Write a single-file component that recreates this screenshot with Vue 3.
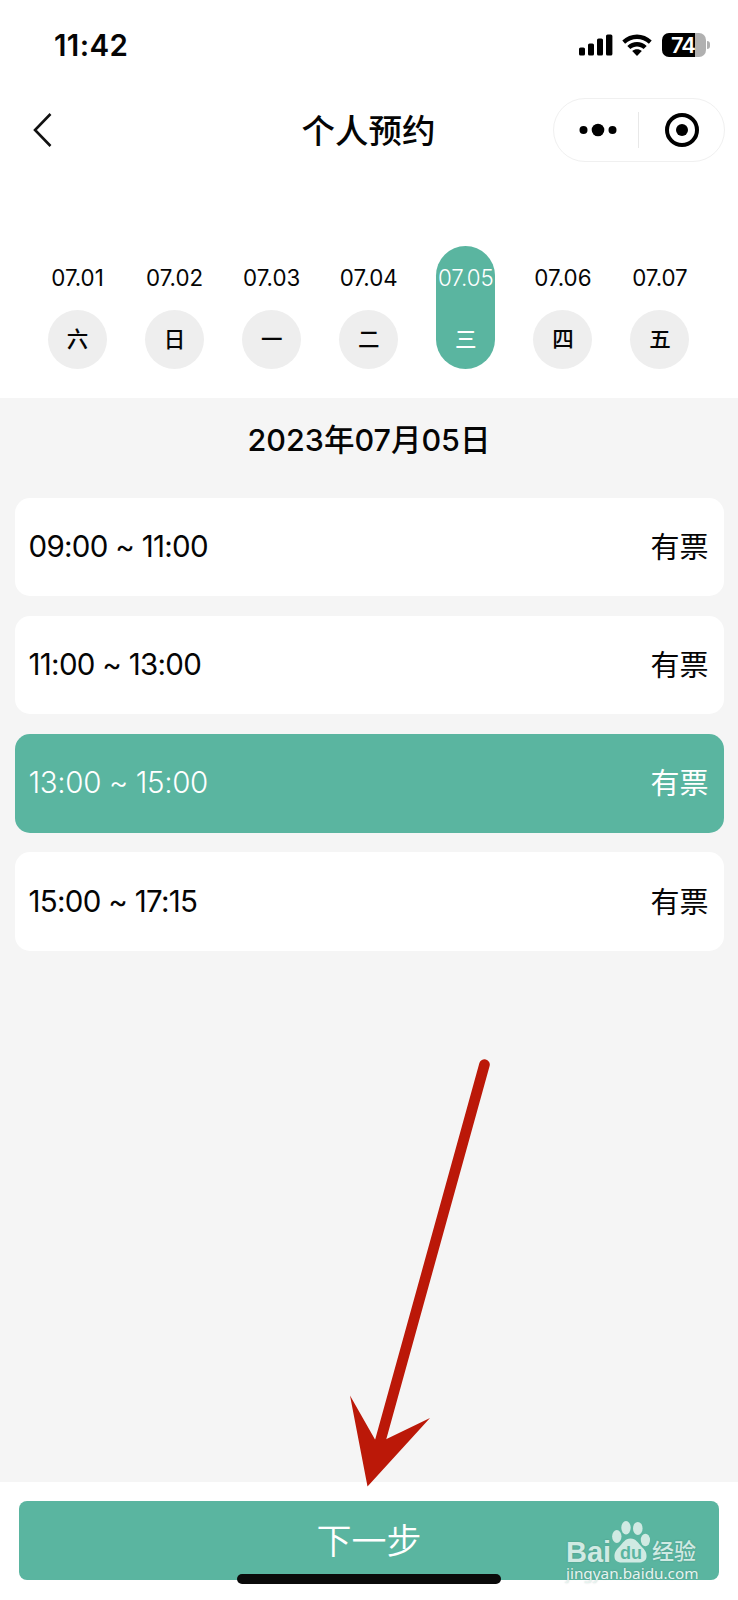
<template>
  <div class="page">
    <!-- 状态栏 -->
    <div class="status-bar">
      <div class="clock">11:42</div>
      <div class="status-icons">
        <svg class="signal" viewBox="0 0 34 22">
          <rect x="0" y="13.5" width="6" height="8" rx="1.6" />
          <rect x="9" y="9.5" width="6" height="12" rx="1.6" />
          <rect x="18" y="4.5" width="6" height="17" rx="1.6" />
          <rect x="27" y="0.5" width="6.4" height="21" rx="1.6" />
        </svg>
        <svg class="wifi" viewBox="0 0 30 22">
          <path d="M0.3 6.6C8.3 -1.6 21.7 -1.6 29.7 6.6L26.9 9.8C20.4 3.4 9.6 3.4 3.1 9.8Z" />
          <path d="M5.3 11.9C10.6 6.700 19.4 6.700 24.7 11.9L21.6 15.1C18.1 11.500 11.9 11.500 8.4 15.1Z" />
          <path d="M10.2 17C12.9 14.5 17.1 14.5 19.8 17L15 21.9Z" />
        </svg>
        <div class="battery">
          <div class="battery-body">74</div>
          <div class="battery-cap"></div>
        </div>
      </div>
    </div>

    <!-- 导航栏 -->
    <div class="nav-bar">
      <svg class="back" viewBox="0 0 20 36">
        <path d="M17.5 2L2 18L17.5 34" />
      </svg>
      <div class="title">个人预约</div>
      <div class="capsule">
        <svg class="more" viewBox="0 0 38 14">
          <circle cx="4.5" cy="7" r="4" />
          <circle cx="19" cy="7" r="6.3" />
          <circle cx="33.5" cy="7" r="4" />
        </svg>
        <div class="divider"></div>
        <svg class="close" viewBox="0 0 34 34">
          <circle class="ring" cx="17" cy="17" r="15" />
          <circle cx="17" cy="17" r="6" />
        </svg>
      </div>
    </div>

    <!-- 日期选择 -->
    <div class="days">
      <div
        v-for="day in days"
        :key="day.date"
        class="day"
        :class="{ active: day.date === activeDay }"
        @click="activeDay = day.date"
      >
        <div class="day-date">{{ day.date }}</div>
        <div class="day-week">{{ day.week }}</div>
      </div>
    </div>

    <!-- 时间段 -->
    <div class="content">
      <div class="full-date">{{ fullDate }}</div>
      <div class="slots">
        <div
          v-for="(slot, index) in slots"
          :key="slot.time"
          class="slot"
          :class="{ active: index === activeSlot }"
          @click="activeSlot = index"
        >
          <div class="slot-time">{{ slot.time }}</div>
          <div class="slot-state">{{ slot.state }}</div>
        </div>
      </div>
    </div>

    <!-- 底部按钮 -->
    <div class="footer">
      <button class="next-btn">下一步</button>
    </div>

    <div class="home-bar"></div>

    <svg class="arrow" viewBox="0 0 90 430">
      <path class="shaft" d="M139.5 6.5L35 384" />
      <path d="M5 337.5L30 381.5H40.5L85 360L22.5 428.5Z" />
    </svg>

    <div class="watermark">
      <div class="wm-logo">
        <span class="wm-bai">Bai</span>
        <div class="wm-paw">
          <svg viewBox="0 0 38 42">
            <ellipse cx="4.8" cy="15.5" rx="4.7" ry="6.4" />
            <ellipse cx="14" cy="6.8" rx="4.7" ry="6.7" />
            <ellipse cx="25.8" cy="7.4" rx="4.8" ry="6.5" />
            <ellipse cx="33.4" cy="19" rx="4.6" ry="6.2" />
            <path d="M18.5 17.500C24 17.500 26 22 29 25C32 28 35 31 34.500 36C34 40.200 30.500 41.500 27 41.500H10C6 41.500 2.800 40.200 2.500 36C2.200 31 5 28 8 25C11 22 13 17.500 18.500 17.500Z" />
          </svg>
          <span class="wm-du">du</span>
        </div>
        <span class="wm-jy">经验</span>
      </div>
      <div class="wm-url">jingyan.baidu.com</div>
    </div>
  </div>
</template>

<script setup>
import { computed, ref } from 'vue'

const days = [
  { date: '07.01', week: '六' },
  { date: '07.02', week: '日' },
  { date: '07.03', week: '一' },
  { date: '07.04', week: '二' },
  { date: '07.05', week: '三' },
  { date: '07.06', week: '四' },
  { date: '07.07', week: '五' }
]
const slots = [
  { time: '09:00 ~ 11:00', state: '有票' },
  { time: '11:00 ~ 13:00', state: '有票' },
  { time: '13:00 ~ 15:00', state: '有票' },
  { time: '15:00 ~ 17:15', state: '有票' }
]

const activeDay = ref('07.05')
const activeSlot = ref(2)

const fullDate = computed(() => {
  const [month, date] = activeDay.value.split('.')
  return `2023年${month}月${date}日`
})
</script>

<style>
body {
  margin: 0;
  background: #fff;
}
</style>

<style scoped>
.page {
  position: relative;
  display: flex;
  flex-direction: column;
  width: 738px;
  height: 1600px;
  overflow: hidden;
  background: #fff;
  color: #050505;
  font-family: Inter, 'Noto Sans CJK SC', sans-serif;
}

.status-bar {
  display: flex;
  justify-content: space-between;
  align-items: center;
  height: 90px;
  padding: 0 28px 0 54px;
  box-sizing: border-box;
}

.clock {
  font-size: 29.5px;
  font-weight: 600;
  letter-spacing: 0.4px;
}

.status-icons {
  display: flex;
  align-items: center;
}

.signal {
  width: 34px;
  height: 22px;
  margin-right: 9px;
}

.wifi {
  width: 30px;
  height: 22px;
  margin-right: 10px;
}

.battery {
  display: flex;
  align-items: center;
  gap: 1px;
}

.battery-body {
  width: 44px;
  height: 24px;
  border-radius: 7px;
  background: linear-gradient(to right, #000 74%, #b0b0b0 74%);
  color: #fff;
  font-size: 22px;
  font-weight: 600;
  line-height: 24px;
  letter-spacing: -1px;
  text-indent: -2px;
  text-align: center;
}

.battery-cap {
  width: 3px;
  height: 8px;
  border-radius: 0 4px 4px 0;
  background: #b0b0b0;
}

.nav-bar {
  display: grid;
  grid-template-columns: 1fr auto 1fr;
  align-items: center;
  height: 80px;
  padding: 0 13px 0 33px;
}

.back {
  width: 20px;
  height: 36px;
  fill: none;
  stroke: #111;
  stroke-width: 2.6;
}

.title {
  padding: 0 20px 3px 0;
  margin-left: 20px;
  font-size: 33.5px;
  font-weight: 500;
  transform: translateX(-10.5px);
}

.capsule {
  display: flex;
  align-items: center;
  justify-self: end;
  width: 172px;
  height: 64px;
  padding: 0 24px 0 25px;
  border: 1px solid #f0f0f0;
  border-radius: 32px;
  box-sizing: border-box;
}

.more {
  flex: none;
  width: 38px;
  height: 14px;
}

.divider {
  width: 1px;
  height: 36px;
  margin: 0 26px 0 21px;
  background: #e8e8e8;
}

.close {
  flex: none;
  width: 34px;
  height: 34px;
}

.ring {
  fill: none;
  stroke: #000;
  stroke-width: 4;
}

.days {
  display: flex;
  justify-content: space-between;
  height: 228px;
  padding: 76px 48.5px 0 48px;
  box-sizing: border-box;
}

.day {
  display: flex;
  flex-direction: column;
  align-items: center;
  justify-content: space-between;
  width: 59px;
  height: 122.5px;
  border-radius: 30px;
}

.day-date {
  padding-top: 18px;
  font-size: 22.3px;
  line-height: 28px;
}

.day-week {
  width: 59px;
  height: 59px;
  border-radius: 50%;
  background: #eee;
  font-size: 21.5px;
  font-weight: 500;
  line-height: 59px;
  text-align: center;
}

.day.active {
  background: #5ab5a0;
  color: #fff;
}

.day.active .day-date {
  font-weight: 300;
}

.day.active .day-week {
  background: none;
}

.content {
  flex: 1;
  padding: 0 14.5px;
  background: #f5f5f5;
}

.full-date {
  height: 99.5px;
  font-size: 30.5px;
  font-weight: 500;
  line-height: 83px;
  text-align: center;
}

.slots {
  display: flex;
  flex-direction: column;
  gap: 19.8px;
}

.slot {
  display: flex;
  justify-content: space-between;
  align-items: center;
  height: 98.5px;
  padding: 0 15px 2px 14px;
  border-radius: 15px;
  background: #fff;
  font-size: 29.5px;
  box-sizing: border-box;
}

.slot-time {
  letter-spacing: -0.7px;
}

.slot-state {
  padding-bottom: 2px;
  font-size: 29px;
}

.slot.active {
  background: #5ab5a0;
  color: #fff;
}

.slot.active .slot-time {
  font-weight: 300;
  letter-spacing: -0.35px;
}

.footer {
  height: 118px;
  padding: 19px 19px 0;
  box-sizing: border-box;
  background: #fff;
}

.next-btn {
  display: block;
  width: 100%;
  height: 79px;
  padding: 0;
  border: none;
  border-radius: 8px;
  background: #5ab5a0;
  color: #fff;
  font-family: inherit;
  font-size: 35px;
  font-weight: 350;
  line-height: 76px;
}

.home-bar {
  position: absolute;
  left: 237px;
  bottom: 16px;
  width: 264px;
  height: 10px;
  border-radius: 5px;
  background: #0a0a0a;
}

.arrow {
  position: absolute;
  left: 345px;
  top: 1058px;
  width: 90px;
  height: 430px;
  overflow: visible;
  fill: #bb1808;
}

.shaft {
  fill: none;
  stroke: #bb1808;
  stroke-width: 10.6;
  stroke-linecap: round;
}

.watermark {
  position: absolute;
  left: 566px;
  top: 1521px;
  width: 134px;
  color: #d0eae3;
  text-shadow: 0 0 2px rgba(0, 0, 0, 0.2);
  white-space: nowrap;
}

.wm-logo {
  display: flex;
  align-items: flex-end;
  height: 42px;
}

.wm-bai {
  width: 46px;
  font-family: 'Liberation Sans', sans-serif;
  font-size: 29px;
  font-weight: 700;
  line-height: 24px;
  margin-bottom: -1px;
}

.wm-paw {
  position: relative;
  width: 38px;
  height: 42px;
}

.wm-paw svg {
  display: block;
  width: 38px;
  height: 42px;
  fill: #d0eae3;
}

.wm-du {
  position: absolute;
  left: 8px;
  bottom: 1px;
  color: #5ab5a0;
  font-family: 'Liberation Sans', sans-serif;
  font-size: 18px;
  font-weight: 700;
  line-height: 18px;
  text-shadow: none;
}

.wm-jy {
  margin-left: 2px;
  font-size: 22px;
  font-weight: 500;
  line-height: 24px;
}

.wm-url {
  color: #e6f4f0;
  font-family: 'Noto Sans', sans-serif;
  font-size: 15.3px;
  line-height: 21px;
}
</style>
